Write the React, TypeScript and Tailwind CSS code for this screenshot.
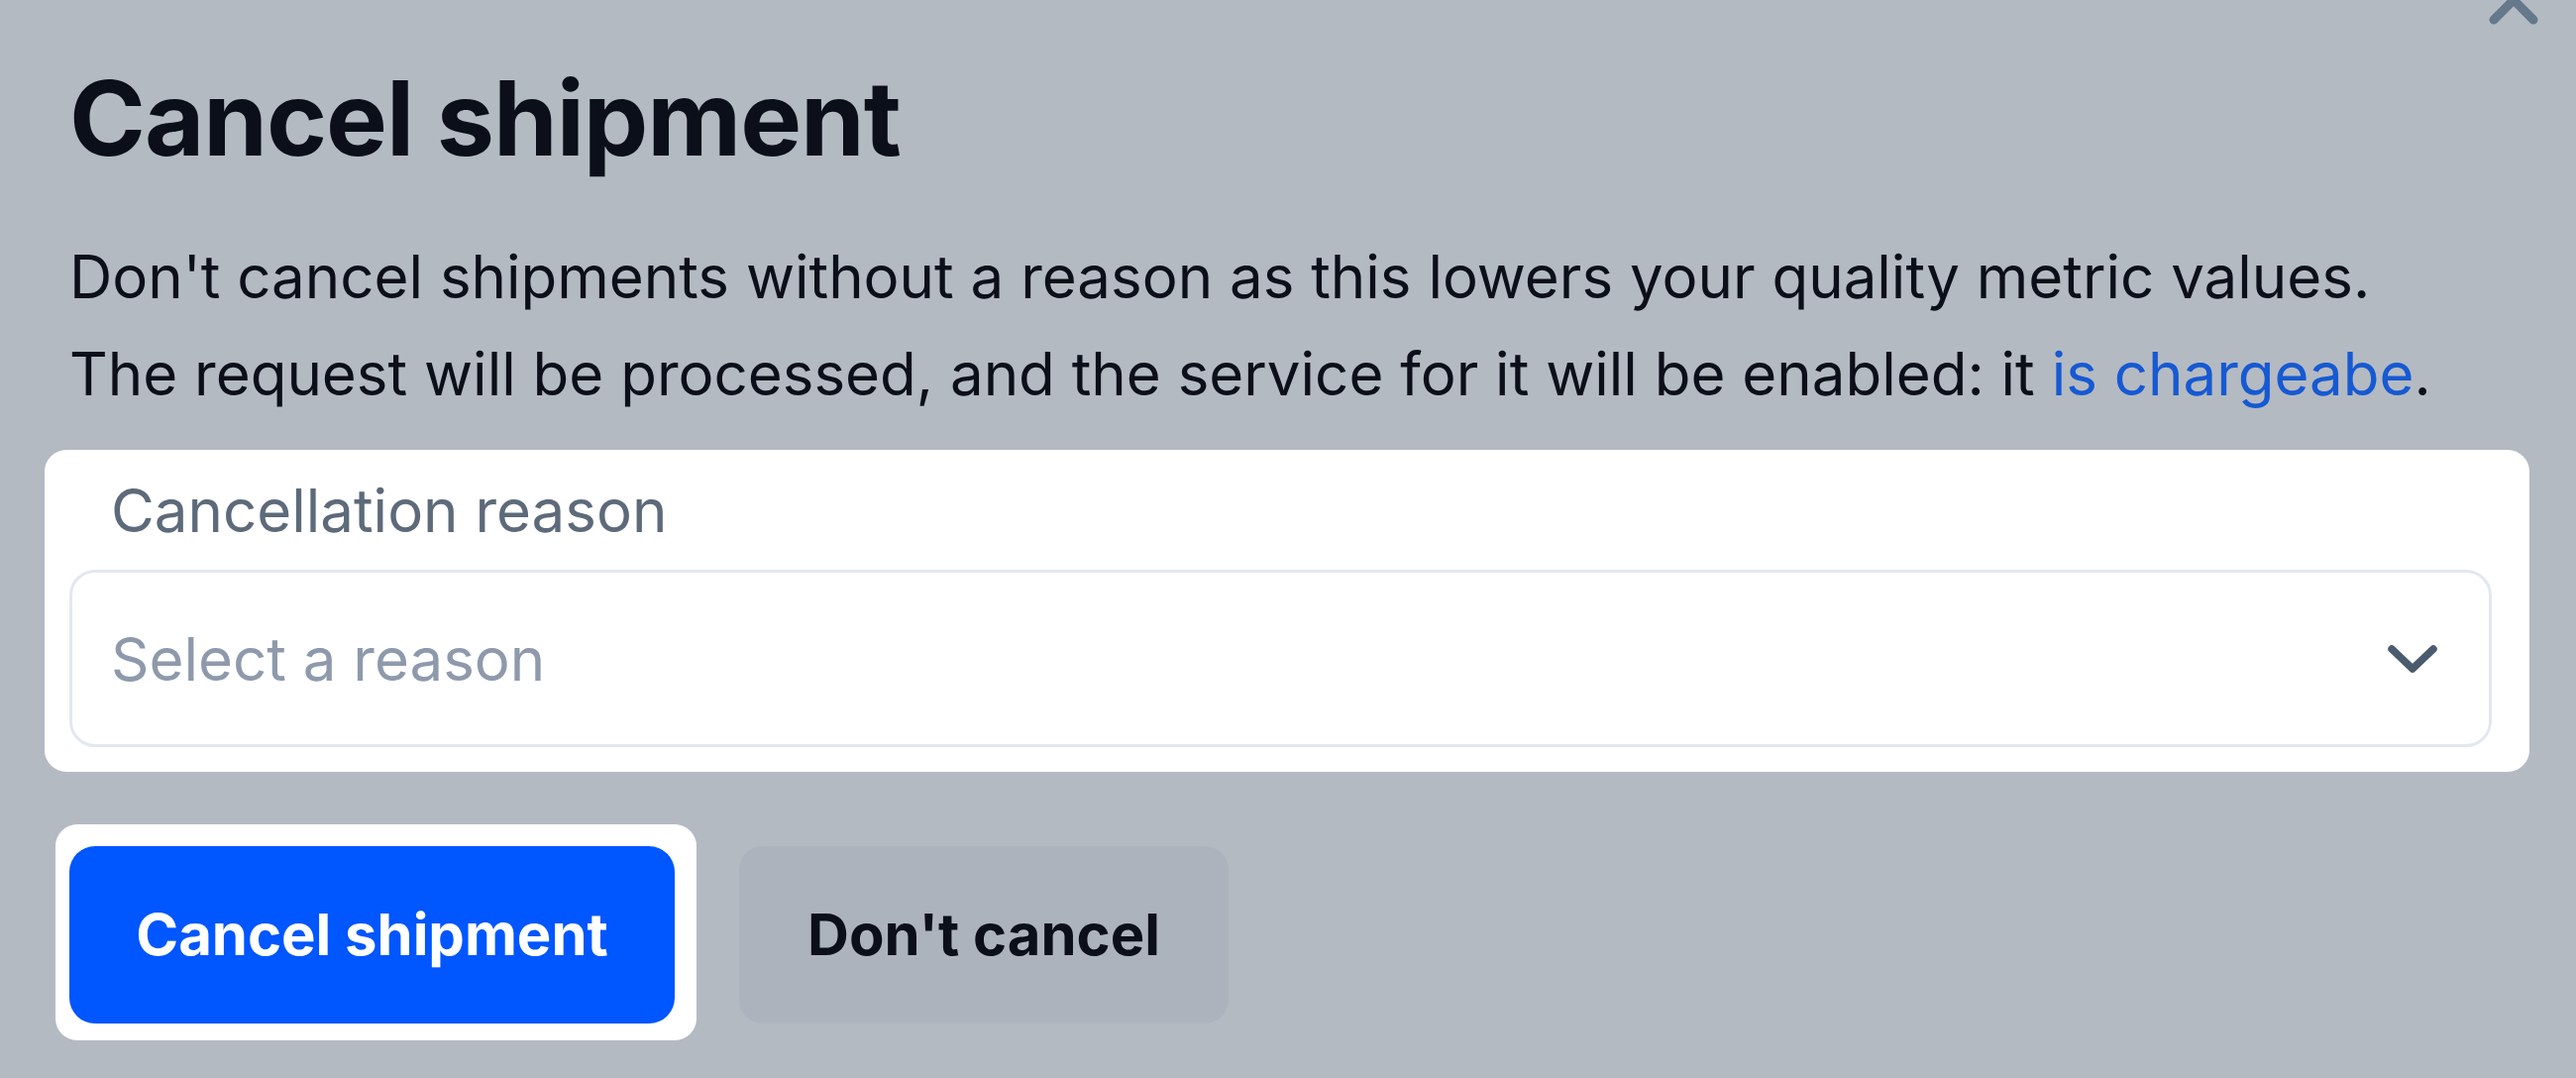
import React from "react";

const font = { fontFamily: "Inter, 'Noto Sans', sans-serif" };

const CloseIcon = () => (
  <svg width="56" height="56" viewBox="0 0 56 56" fill="none">
    <path d="M8 8L48 48M48 8L8 48" stroke="#66788c" strokeWidth="9" strokeLinecap="round" />
  </svg>
);

const Chevron = () => (
  <svg width="54" height="34" viewBox="0 0 54 34" fill="none">
    <path d="M6 7L27 27L48 7" stroke="#4a5b6e" strokeWidth="7.5" strokeLinecap="round" strokeLinejoin="round" />
  </svg>
);

const App = () => {
  return (
    <div
      style={font}
      className="relative h-[1088px] w-[2600px] overflow-hidden bg-[#b4bac2] pl-[70px] pt-[67px] text-[#0b0f19]"
    >
      <div className="absolute right-[35px] top-[-28px]">
        <CloseIcon />
      </div>

      <h1 className="text-[104px] font-bold leading-none tracking-[-0.01em]">Cancel shipment</h1>

      <div className="mt-[59px] text-[60px] leading-[98px]">
        <p>Don't cancel shipments without a reason as this lowers your quality metric values.</p>
        <p>
          The request will be processed, and the service for it will be enabled: it{" "}
          <span className="text-[#1659d2]">is chargeabe</span>.
        </p>
      </div>

      <div className="-ml-[25px] mt-[28px] w-[2508px] rounded-[22px] bg-white pb-[25px] pl-[25px] pr-[38px] pt-[28px]">
        <div className="pl-[42px] text-[60px] leading-[66px] text-[#5d6a7a]">Cancellation reason</div>
        <div className="mt-[27px] flex h-[179px] items-center justify-between rounded-[26px] border-[3px] border-[#e3e8ef] pl-[39px] pr-[50px]">
          <span className="text-[60px] text-[#8e9aab]">Select a reason</span>
          <Chevron />
        </div>
      </div>

      <div className="mt-[53px] flex items-start gap-[43px]">
        <div className="-ml-[14px] rounded-[22px] bg-white pb-[17px] pl-[14px] pr-[22px] pt-[22px]">
          <button className="flex h-[179px] w-[611px] items-center justify-center rounded-[26px] bg-[#0056ff] text-[58px] font-bold text-white">
            Cancel shipment
          </button>
        </div>
        <button className="mt-[22px] flex h-[179px] w-[494px] items-center justify-center rounded-[24px] bg-[#adb3bd] text-[58px] font-bold">
          Don't cancel
        </button>
      </div>
    </div>
  );
};

export default App;
